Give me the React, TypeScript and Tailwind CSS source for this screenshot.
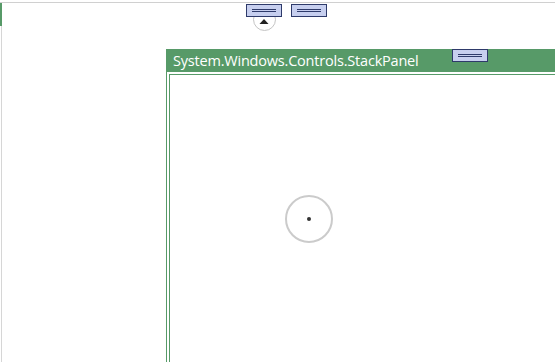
import React from "react";

function GripBox({ className = "" }: { className?: string }) {
  return (
    <div
      className={`relative z-10 flex h-[13px] w-[36px] shrink-0 flex-col items-center justify-center gap-px border border-[#2e3a6a] bg-[#c7cfef] ${className}`}
    >
      <div className="h-px w-[24px] bg-[#2e3a6a]" />
      <div className="h-px w-[24px] bg-[#2e3a6a]" />
    </div>
  );
}

export default function App() {
  return (
    <div className="relative h-[362px] w-[555px] overflow-hidden bg-white font-['Open_Sans',sans-serif]">
      {/* top rule */}
      <div className="mt-[2px] h-px bg-[#d0d0d0]" />

      {/* left edge: selected (green) then plain */}
      <div className="absolute bottom-0 left-0 top-[3px] flex w-[2px] flex-col">
        <div className="h-[23px] w-[2px] bg-[#579a68]" />
        <div className="ml-px w-px flex-1 bg-[#d6d6d6]" />
      </div>

      {/* top adorner handles */}
      <div className="absolute left-[246px] top-[4px] flex items-start gap-[9px]">
        <div className="flex flex-col items-center">
          <GripBox />
          <div className="-mt-[9px] flex h-[23px] w-[23px] items-center justify-center rounded-full border border-[#c4c4c4] bg-white">
            <svg width="10" height="6" viewBox="0 0 10 6" className="mt-[5px]">
              <polygon points="5,0 9.5,5 0.5,5" fill="#222" />
            </svg>
          </div>
        </div>
        <GripBox />
      </div>

      {/* stack panel window */}
      <div className="absolute left-[166px] top-[49px] flex h-[330px] w-[606px] flex-col border-l border-[#579a68]">
        <div className="flex h-[23px] items-start bg-[#579a68]">
          <span className="mt-[5px] w-[285px] shrink-0 pl-[6px] text-[14.5px] leading-none tracking-[-0.2px] text-white">
            System.Windows.Controls.StackPanel
          </span>
          <GripBox />
        </div>
        <div className="flex flex-1 flex-col pl-[2px] pt-[2px]">
          <div className="flex-1 border-l border-t border-[#579a68] bg-white" />
        </div>
      </div>

      {/* rotation pivot */}
      <div className="absolute left-[285px] top-[195px] flex h-[48px] w-[48px] items-center justify-center rounded-full border-2 border-[#cbcbcb]">
        <div className="h-[4px] w-[4px] rounded-full bg-[#333]" />
      </div>
    </div>
  );
}
